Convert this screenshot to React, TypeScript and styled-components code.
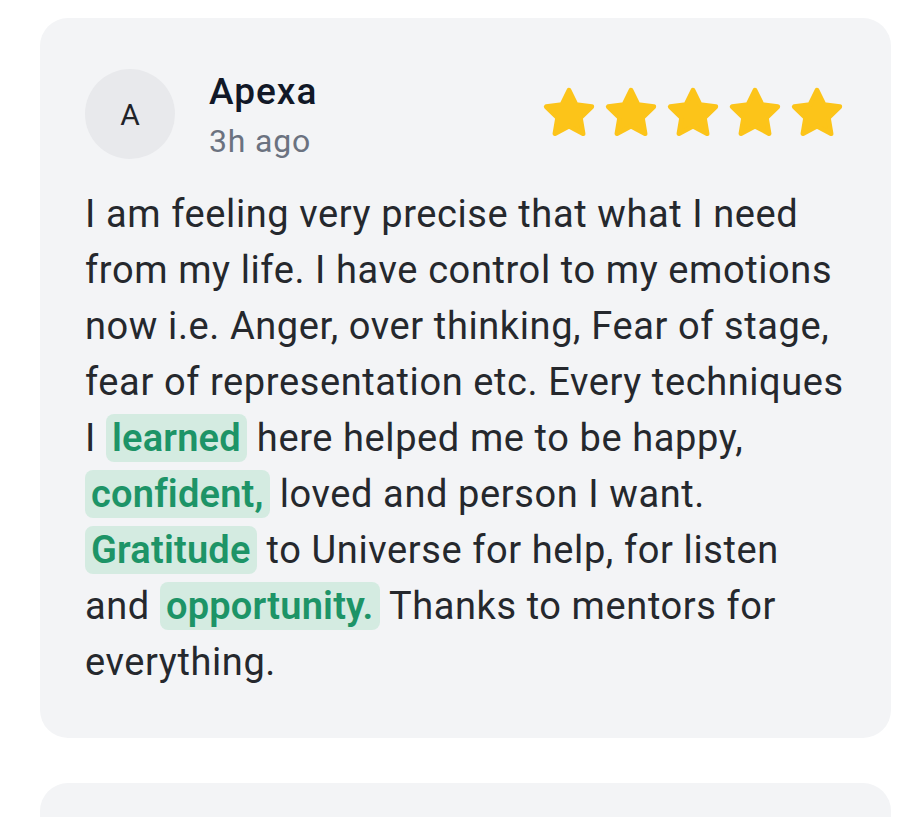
import React from "react";
import styled, { createGlobalStyle } from "styled-components";

const GlobalStyle = createGlobalStyle`
  html, body {
    margin: 0;
    padding: 0;
    background: #ffffff;
    font-family: Roboto, "Noto Sans", "Liberation Sans", sans-serif;
  }
`;

const Page = styled.div`
  display: flex;
  flex-direction: column;
  gap: 45px;
  padding: 18px 31px 0 40px;
  height: 817px;
  overflow: hidden;
  box-sizing: border-box;
`;

const Card = styled.div<{ $empty?: boolean }>`
  background: #f3f4f6;
  border-radius: 28px;
  padding: 51px 45px 48px 45px;
  flex-shrink: 0;
  min-height: ${(p) => (p.$empty ? "200px" : "auto")};
`;

const Header = styled.div`
  display: flex;
  align-items: flex-start;
  gap: 34px;
`;

const Avatar = styled.div`
  width: 90px;
  height: 90px;
  border-radius: 50%;
  background: #e8e9ec;
  display: flex;
  align-items: center;
  justify-content: center;
  font-size: 30px;
  color: #1f2328;
  flex-shrink: 0;
`;

const Meta = styled.div`
  display: flex;
  flex-direction: column;
  gap: 4px;
  flex: 1;
`;

const Name = styled.div`
  font-size: 37px;
  font-weight: 500;
  letter-spacing: 1px;
  color: #111827;
  line-height: 46px;
`;

const Time = styled.div`
  font-size: 32px;
  letter-spacing: 0.8px;
  color: #6b7280;
  line-height: 44px;
`;

const Stars = styled.div`
  display: flex;
  gap: 4px;
  margin-top: 15px;
`;

const Body = styled.p`
  margin: 23px 0 0 0;
  font-size: 38px;
  letter-spacing: 0.6px;
  line-height: 56px;
  color: #25282d;
`;

const Mark = styled.span`
  background: #d4ebe1;
  color: #1d9467;
  font-weight: 600;
  letter-spacing: 0.2px;
  border-radius: 8px;
  padding: 2px 6px;
`;

const Star: React.FC = () => (
  <svg width="58" height="58" viewBox="0 0 24 24">
    <path
      d="M12 2.6l2.9 5.9 6.5.9-4.7 4.6 1.1 6.5L12 17.4l-5.8 3.1 1.1-6.5-4.7-4.6 6.5-.9z"
      fill="#fcc419"
      stroke="#fcc419"
      strokeWidth="2"
      strokeLinejoin="round"
    />
  </svg>
);

const App: React.FC = () => {
  return (
    <>
      <GlobalStyle />
      <Page>
        <Card>
          <Header>
            <Avatar>A</Avatar>
            <Meta>
              <Name>Apexa</Name>
              <Time>3h ago</Time>
            </Meta>
            <Stars>
              {[0, 1, 2, 3, 4].map((i) => (
                <Star key={i} />
              ))}
            </Stars>
          </Header>
          <Body>
            I am feeling very precise that what I need from my life. I have
            control to my emotions now i.e. Anger, over thinking, Fear of stage,
            fear of representation etc. Every techniques I{" "}
            <Mark>learned</Mark> here helped me to be happy,{" "}
            <Mark>confident,</Mark> loved and person I want.{" "}
            <Mark>Gratitude</Mark> to Universe for help, for listen and{" "}
            <Mark>opportunity.</Mark> Thanks to mentors for everything.
          </Body>
        </Card>
        <Card $empty />
      </Page>
    </>
  );
};

export default App;
